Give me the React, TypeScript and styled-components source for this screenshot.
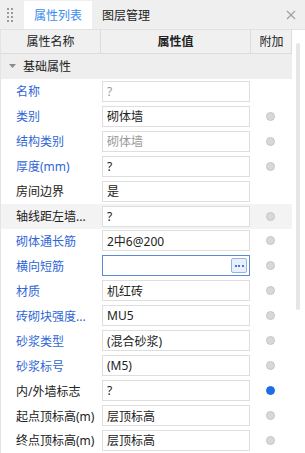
import React from 'react';
import styled, { createGlobalStyle } from 'styled-components';

const GlobalStyle = createGlobalStyle`
  html, body {
    margin: 0;
    padding: 0;
    background: #ffffff;
  }
  body {
    font-family: "Noto Sans", "Noto Sans CJK SC", sans-serif;
    font-size: 12px;
    color: #222222;
  }
`;

const BLUE_LABEL = '#2f66d6';

const Panel = styled.div`
  width: 305px;
  height: 453px;
  overflow: hidden;
  display: flex;
  flex-direction: column;
  background: #ffffff;
`;

const TabBar = styled.div`
  height: 30px;
  flex-shrink: 0;
  display: flex;
  align-items: flex-end;
  background: #efefef;
  border-bottom: 1px solid #e2e2e2;
  box-sizing: border-box;
`;

const Grip = styled.div`
  width: 24px;
  height: 100%;
  display: flex;
  align-items: center;
  justify-content: center;
  padding-right: 3px;
  box-sizing: border-box;
`;

const Tab = styled.div<{ $active?: boolean }>`
  height: 28px;
  width: 68px;
  display: flex;
  align-items: center;
  justify-content: center;
  background: ${({ $active }) => ($active ? '#ffffff' : 'transparent')};
  color: ${({ $active }) => ($active ? '#3a8cf0' : '#222222')};
  font-size: 12px;
`;

const CloseButton = styled.div`
  margin-left: auto;
  width: 28px;
  height: 100%;
  display: flex;
  align-items: center;
  justify-content: center;
`;

const Body = styled.div`
  flex: 1;
  display: flex;
  min-height: 0;
`;

const Table = styled.div`
  width: 292px;
  flex-shrink: 0;
  display: flex;
  flex-direction: column;
  border-left: 1px solid #e4e4e4;
  box-sizing: border-box;
`;

const HeaderRow = styled.div`
  height: 24px;
  display: grid;
  grid-template-columns: 100px 150px 41px;
  background: #f0f0f0;
  border-bottom: 1px solid #dcdcdc;
  border-right: 1px solid #dcdcdc;
  box-sizing: border-box;
`;

const HeaderCell = styled.div<{ $bold?: boolean; $last?: boolean }>`
  display: flex;
  align-items: center;
  justify-content: center;
  font-weight: ${({ $bold }) => ($bold ? 600 : 400)};
  border-right: ${({ $last }) => ($last ? 'none' : '1px solid #dcdcdc')};
  color: #222222;
`;

const SectionRow = styled.div`
  height: 25px;
  display: flex;
  align-items: center;
  background: #eeeeee;
  padding-left: 8px;
  gap: 7px;
  color: #222222;
`;

const Row = styled.div<{ $highlight?: boolean }>`
  height: 25px;
  display: grid;
  grid-template-columns: 101px 148px 42px;
  align-items: center;
  background: ${({ $highlight }) => ($highlight ? '#f3f3f3' : '#ffffff')};
`;

const Label = styled.div<{ $blue?: boolean }>`
  padding-left: 15px;
  color: ${({ $blue }) => ($blue ? BLUE_LABEL : '#222222')};
  white-space: nowrap;
  overflow: hidden;
`;

const ValueBox = styled.div<{ $focused?: boolean; $muted?: boolean }>`
  height: 21px;
  box-sizing: border-box;
  border: 1px solid ${({ $focused }) => ($focused ? '#5a8ad8' : '#dedede')};
  background: #ffffff;
  display: flex;
  align-items: center;
  padding: 0 2px 0 4px;
  color: ${({ $muted }) => ($muted ? '#9a9a9a' : '#222222')};
  white-space: nowrap;
`;

const EllipsisButton = styled.div`
  margin-left: auto;
  width: 14px;
  height: 13px;
  border: 1px solid #8fb4ea;
  border-radius: 2px;
  background: #eaf0fb;
  display: flex;
  align-items: center;
  justify-content: center;
  gap: 1.5px;
`;

const EllipsisDot = styled.span`
  width: 2px;
  height: 2px;
  background: #3a7be0;
`;

const ExtraCell = styled.div`
  display: flex;
  align-items: center;
  justify-content: center;
  padding-right: 2px;
`;

const Dot = styled.span<{ $on?: boolean }>`
  width: 9px;
  height: 9px;
  border-radius: 50%;
  box-sizing: border-box;
  background: ${({ $on }) => ($on ? '#1a6fe6' : '#d8d8d8')};
  border: 1px solid ${({ $on }) => ($on ? '#1a6fe6' : '#c6c6c6')};
`;

const ScrollTrack = styled.div`
  flex: 1;
  display: flex;
  justify-content: center;
  padding-top: 13px;
  padding-right: 1px;
`;

const ScrollThumb = styled.div`
  width: 4px;
  height: 267px;
  border-radius: 2px;
  background: #e6e6e6;
`;

type Prop = {
  label: string;
  value: string;
  blue?: boolean;
  muted?: boolean;
  dot?: 'off' | 'on' | null;
  highlight?: boolean;
  focused?: boolean;
};

const props: Prop[] = [
  { label: '名称', value: '?', blue: true, muted: true, dot: null },
  { label: '类别', value: '砌体墙', blue: true, dot: 'off' },
  { label: '结构类别', value: '砌体墙', blue: true, muted: true, dot: 'off' },
  { label: '厚度(mm)', value: '?', blue: true, dot: 'off' },
  { label: '房间边界', value: '是', dot: null },
  { label: '轴线距左墙...', value: '?', dot: 'off', highlight: true },
  { label: '砌体通长筋', value: '2中6@200', blue: true, dot: 'off' },
  { label: '横向短筋', value: '', blue: true, dot: 'off', focused: true },
  { label: '材质', value: '机红砖', blue: true, dot: 'off' },
  { label: '砖砌块强度...', value: 'MU5', blue: true, dot: 'off' },
  { label: '砂浆类型', value: '(混合砂浆)', blue: true, dot: 'off' },
  { label: '砂浆标号', value: '(M5)', blue: true, dot: 'off' },
  { label: '内/外墙标志', value: '?', dot: 'on' },
  { label: '起点顶标高(m)', value: '层顶标高', dot: 'off' },
  { label: '终点顶标高(m)', value: '层顶标高', dot: 'off' },
];

const GripIcon = () => (
  <svg width="7" height="14" viewBox="0 0 7 14">
    {[0, 1, 2, 3].map((r) =>
      [0, 1].map((c) => (
        <rect key={`${r}-${c}`} x={c * 4} y={r * 4} width="2" height="2" fill="#9a9a9a" />
      )),
    )}
  </svg>
);

const CloseIcon = () => (
  <svg width="10" height="10" viewBox="0 0 10 10">
    <path d="M1 1 L9 9 M9 1 L1 9" stroke="#a0a0a0" strokeWidth="1.2" fill="none" />
  </svg>
);

const Caret = () => (
  <svg width="7" height="5" viewBox="0 0 7 5">
    <path d="M0 0 H7 L3.5 4 Z" fill="#8a8a8a" />
  </svg>
);

export default function App() {
  return (
    <>
      <GlobalStyle />
      <Panel>
        <TabBar>
          <Grip>
            <GripIcon />
          </Grip>
          <Tab $active>属性列表</Tab>
          <Tab>图层管理</Tab>
          <CloseButton>
            <CloseIcon />
          </CloseButton>
        </TabBar>
        <Body>
          <Table>
            <HeaderRow>
              <HeaderCell>属性名称</HeaderCell>
              <HeaderCell $bold>属性值</HeaderCell>
              <HeaderCell $last>附加</HeaderCell>
            </HeaderRow>
            <SectionRow>
              <Caret />
              <span>基础属性</span>
            </SectionRow>
            {props.map((p) => (
              <Row key={p.label} $highlight={p.highlight}>
                <Label $blue={p.blue}>{p.label}</Label>
                <ValueBox $focused={p.focused} $muted={p.muted}>
                  {p.value}
                  {p.focused && (
                    <EllipsisButton>
                      <EllipsisDot />
                      <EllipsisDot />
                      <EllipsisDot />
                    </EllipsisButton>
                  )}
                </ValueBox>
                <ExtraCell>{p.dot && <Dot $on={p.dot === 'on'} />}</ExtraCell>
              </Row>
            ))}
          </Table>
          <ScrollTrack>
            <ScrollThumb />
          </ScrollTrack>
        </Body>
      </Panel>
    </>
  );
}
